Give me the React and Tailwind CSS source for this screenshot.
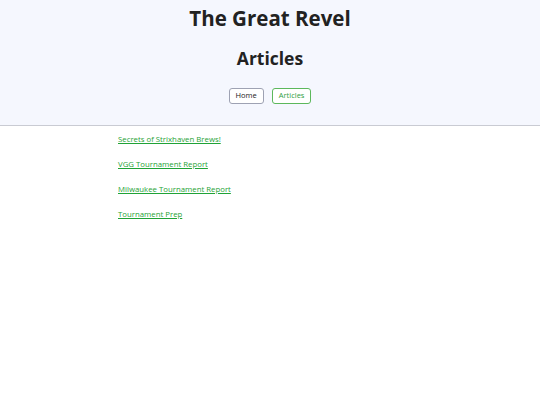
export default function App() {
  const links = [
    "Secrets of Strixhaven Brews!",
    "VGG Tournament Report",
    "Milwaukee Tournament Report",
    "Tournament Prep",
  ];
  return (
    <div className="min-h-[405px] bg-white" style={{ fontFamily: "'Open Sans', sans-serif" }}>
      <header className="bg-[#f5f7fe] border-b border-[#c9cbd3] h-[126px] flex flex-col items-center">
        <h1 className="text-[20.5px] font-bold text-[#222] leading-none mt-[8px]">The Great Revel</h1>
        <h2 className="text-[17.5px] font-bold text-[#222] leading-none mt-[21px]">Articles</h2>
        <nav className="flex gap-2 mt-[21px]">
          <a className="h-4 px-[6px] flex items-center text-[7.5px] text-[#222] border border-[#9ea2b3] rounded-[3px] bg-white">
            Home
          </a>
          <a className="h-4 px-[6px] flex items-center text-[7.5px] text-[#2ea043] border border-[#5cb85c] rounded-[3px] bg-white">
            Articles
          </a>
        </nav>
      </header>
      <main className="w-[304px] mx-auto pt-[7px] flex flex-col gap-[12px]">
        {links.map((l) => (
          <a key={l} href="#" className="text-[7.8px] leading-[13px] text-[#1fa336] underline">
            {l}
          </a>
        ))}
      </main>
    </div>
  );
}
